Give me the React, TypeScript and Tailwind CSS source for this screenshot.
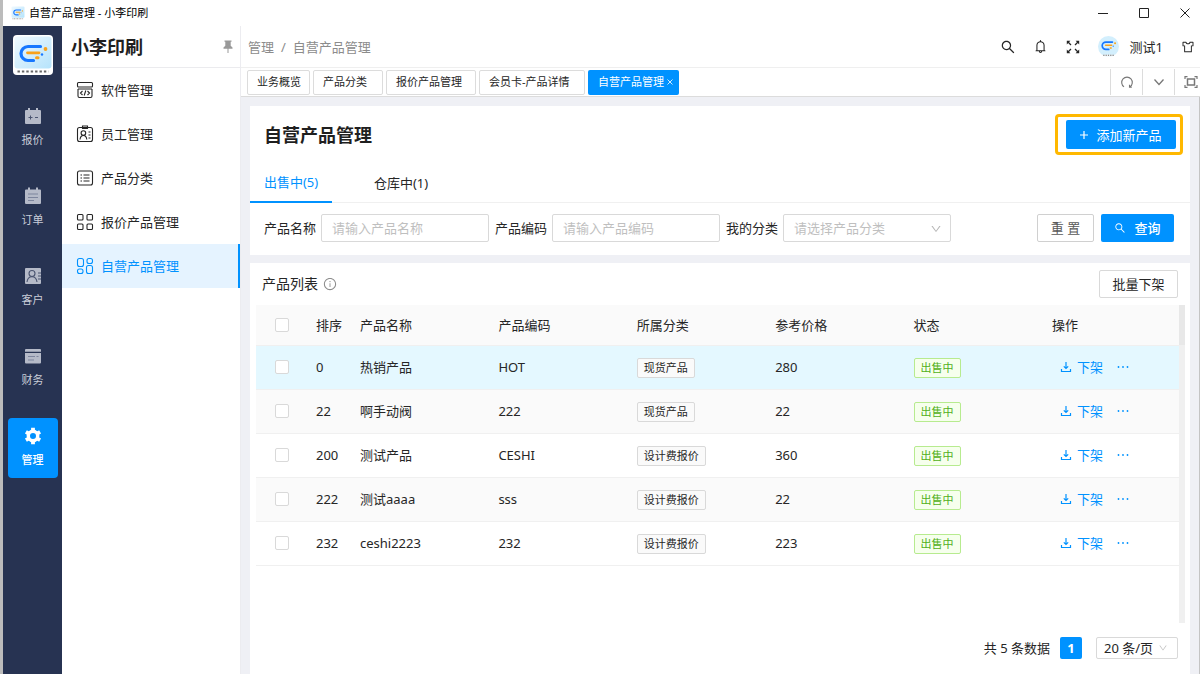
import type { ReactNode } from 'react';
import {
  AiOutlineBell,
  AiOutlineDown,
  AiOutlineInfoCircle,
  AiOutlineSearch,
  AiOutlineSkin,
} from 'react-icons/ai';

interface Product {
  sort: number;
  name: string;
  code: string;
  category: string;
  price: number;
}

const products: Product[] = [
  { sort: 0, name: '热销产品', code: 'HOT', category: '现货产品', price: 280 },
  { sort: 22, name: '啊手动阀', code: '222', category: '现货产品', price: 22 },
  { sort: 200, name: '测试产品', code: 'CESHI', category: '设计费报价', price: 360 },
  { sort: 222, name: '测试aaaa', code: 'sss', category: '设计费报价', price: 22 },
  { sort: 232, name: 'ceshi2223', code: '232', category: '设计费报价', price: 223 },
];

const columns = ['产品名称', '产品编码', '所属分类', '参考价格', '状态'];

function LogoMark() {
  return (
    <>
      <path d="M27.500 11.500H15a7 7 0 0 0 0 14h5.500" fill="none" stroke="#1677ff" strokeWidth="3.200" strokeLinecap="round" />
      <path d="M14.500 17.800h11.500" stroke="#f9a11b" strokeWidth="2.800" strokeLinecap="round" />
      <circle cx="32.500" cy="14" r="1.900" fill="#f9a11b" />
      <circle cx="29" cy="19.500" r="1.200" fill="#1677ff" />
      <path d="M23.500 22.800h1.500" stroke="#f9a11b" strokeWidth="3" strokeLinecap="round" />
    </>
  );
}

function Logo({ className }: { className: string }) {
  return (
    <svg viewBox="0 0 40 40" className={className} aria-hidden="true">
      <defs>
        <linearGradient id="logoBg" x1="0" y1="0" x2="1" y2="1">
          <stop offset="0" stopColor="#f0f9ff" />
          <stop offset="1" stopColor="#b5e3fb" />
        </linearGradient>
      </defs>
      <rect width="40" height="40" rx="4" fill="#fff" />
      <rect x="1.500" y="1.500" width="37" height="32" rx="3" fill="url(#logoBg)" />
      <LogoMark />
      <path d="M4.500 36.500h31" stroke="#666" strokeWidth="2" strokeDasharray="2.400 2" />
    </svg>
  );
}

function Avatar() {
  return (
    <svg viewBox="0 0 40 40" className="h-[21px] w-[21px]" aria-hidden="true">
      <circle cx="20" cy="20" r="20" fill="#d3effd" />
      <LogoMark />
      <path d="M8 35.500h24a20 20 0 0 1-24 0z" fill="#fff" />
      <path d="M10 36.500h20" stroke="#666" strokeWidth="2" strokeDasharray="2.400 2" />
    </svg>
  );
}

function RailIcon({ children }: { children: ReactNode }) {
  return (
    <svg viewBox="0 0 18 18" className="h-[18px] w-[18px]" fill="#b5bac8" aria-hidden="true">
      {children}
    </svg>
  );
}

const railItems = [
  {
    label: '报价',
    icon: (
      <RailIcon>
        <path d="M2 3h14a1 1 0 0 1 1 1v12a1 1 0 0 1-1 1H2a1 1 0 0 1-1-1V4a1 1 0 0 1 1-1z" />
        <path d="M5 1v3M13 1v3" stroke="#b5bac8" strokeWidth="2" />
        <path d="M4.500 10.500h4M6.500 8.500v4M11 10.500h3" stroke="#4a5470" strokeWidth="1" />
      </RailIcon>
    ),
  },
  {
    label: '订单',
    icon: (
      <RailIcon>
        <path d="M2 2.500h14a1 1 0 0 1 1 1V16a1 1 0 0 1-1 1H2a1 1 0 0 1-1-1V3.500a1 1 0 0 1 1-1z" />
        <path d="M5 .5v3M13 .5v3" stroke="#b5bac8" strokeWidth="2" />
        <path d="M4 7h10M4 10.500h10M4 13.500h6" stroke="#7d859d" strokeWidth="1" />
      </RailIcon>
    ),
  },
  {
    label: '客户',
    icon: (
      <RailIcon>
        <rect x="1" y="1" width="16" height="16" rx="1" />
        <circle cx="8" cy="6.500" r="3" fill="none" stroke="#4a5470" strokeWidth="1.100" />
        <path d="M3 15c.4-3.500 2.500-5.300 5-5.300s4.600 1.800 5 5.300M14 6h3M14 9h3M14 12h3" fill="none" stroke="#4a5470" strokeWidth="1.100" />
      </RailIcon>
    ),
  },
  {
    label: '财务',
    icon: (
      <RailIcon>
        <path d="M2 2h14a1 1 0 0 1 1 1v1.800H1V3a1 1 0 0 1 1-1zM1 6h16v9.500a1 1 0 0 1-1 1H2a1 1 0 0 1-1-1z" />
        <path d="M4 9.500h7M12.500 9.500h2M4 13h6" stroke="#7d859d" strokeWidth="1" />
      </RailIcon>
    ),
  },
  {
    label: '管理',
    active: true,
    icon: (
      <svg viewBox="0 0 18 18" className="h-[18px] w-[18px]" aria-hidden="true">
        <circle cx="9" cy="9" r="4.700" fill="none" stroke="#fff" strokeWidth="3.400" />
        <path d="M9 .8v3M9 14.200v3M1.900 4.900l2.600 1.500M13.500 11.600l2.600 1.500M1.900 13.100l2.600-1.500M13.500 6.400l2.600-1.500" stroke="#fff" strokeWidth="3.800" />
      </svg>
    ),
  },
];

function MenuIcon({ children }: { children: ReactNode }) {
  return (
    <svg viewBox="0 0 18 18" className="h-[18px] w-[18px]" fill="none" stroke="currentColor" strokeWidth="1.100" aria-hidden="true">
      {children}
    </svg>
  );
}

const menuItems = [
  {
    label: '软件管理',
    icon: (
      <MenuIcon>
        <rect x="1.500" y="1.500" width="15" height="4.500" rx="1" />
        <path d="M2 8v7a1.500 1.500 0 0 0 1.500 1.500h11A1.500 1.500 0 0 0 16 15V8M2 8h14M6.500 10l-2 2 2 2M11.500 10l2 2-2 2M9.800 9.500l-1.600 5" />
      </MenuIcon>
    ),
  },
  {
    label: '员工管理',
    icon: (
      <MenuIcon>
        <rect x="1.500" y="2.500" width="15" height="14" rx="2" />
        <path d="M6.500 2.500V1h5v2.500h-5zM4 14.500c.3-2.600 1.500-4 3.400-4s3.100 1.400 3.400 4M12.500 7h2M12.500 10h2M12.500 13h2" />
        <circle cx="7.400" cy="8" r="2.300" />
      </MenuIcon>
    ),
  },
  {
    label: '产品分类',
    icon: (
      <MenuIcon>
        <rect x="1.500" y="2" width="15" height="14" rx="2" />
        <path d="M4.500 6h1.500M4.500 9h1.500M4.500 12h1.500M7.500 6h6M7.500 9h6M7.500 12h6" />
      </MenuIcon>
    ),
  },
  {
    label: '报价产品管理',
    icon: (
      <MenuIcon>
        <rect x="1.500" y="1.500" width="5.500" height="5.500" rx="1" />
        <rect x="11" y="1.500" width="5.500" height="5.500" rx="1" />
        <rect x="1.500" y="11" width="5.500" height="5.500" rx="1" />
        <rect x="11" y="11" width="5.500" height="5.500" rx="1" />
      </MenuIcon>
    ),
  },
  {
    label: '自营产品管理',
    active: true,
    icon: (
      <MenuIcon>
        <rect x="1.500" y="1.500" width="6" height="8" rx="2" />
        <rect x="11" y="1.500" width="5.500" height="5" rx="2" />
        <rect x="1.500" y="12" width="5.500" height="4.500" rx="2" />
        <rect x="10.500" y="8.500" width="6" height="8" rx="2" />
      </MenuIcon>
    ),
  },
];

function TitleBar() {
  return (
    <div className="flex h-[26px] shrink-0 items-center justify-between pr-[10px] pl-2">
      <div className="flex items-center gap-1">
        <Logo className="h-[14px] w-[14px]" />
        <span className="text-[11px] text-black">自营产品管理 - 小李印刷</span>
      </div>
      <div className="flex items-center gap-[31px] text-[#222]">
        <button aria-label="最小化">
          <svg viewBox="0 0 10 10" className="h-[10px] w-[10px]" stroke="currentColor"><path d="M0 5.500h10" /></svg>
        </button>
        <button aria-label="最大化">
          <svg viewBox="0 0 10 10" className="h-[10px] w-[10px]" stroke="currentColor" fill="none"><path d="M.5.500h9v9h-9z" /></svg>
        </button>
        <button aria-label="关闭">
          <svg viewBox="0 0 10 10" className="h-[10px] w-[10px]" stroke="currentColor"><path d="M.5.500l9 9M9.500.500l-9 9" /></svg>
        </button>
      </div>
    </div>
  );
}

function Rail() {
  return (
    <nav className="flex w-[59px] shrink-0 flex-col items-center bg-[#273352]">
      <Logo className="mt-[9px] mb-[23px] h-10 w-10" />
      <div className="flex flex-col gap-5">
        {railItems.map((item) => (
          <a
            key={item.label}
            href="#"
            className={`flex h-[60px] w-[50px] flex-col items-center gap-[6px] rounded pt-[9px] text-[11px] leading-[18px] ${
              item.active ? 'bg-[#0092ff] font-medium text-white' : 'text-[#c9cdd8]'
            }`}
          >
            {item.icon}
            {item.label}
          </a>
        ))}
      </div>
    </nav>
  );
}

function Sidebar() {
  return (
    <aside className="w-[179px] shrink-0 border-r border-[#ececf0] bg-white">
      <div className="flex h-[42px] items-center justify-between border-b border-[#ebebee] pr-[7px] pl-[9px]">
        <h2 className="text-[18px] font-bold text-[#1f1f1f]">小李印刷</h2>
        <svg viewBox="0 0 10 13" className="h-[13px] w-[10px]" fill="#999" aria-hidden="true">
          <path d="M1.500.500h7v1.300h-.8v4L9.500 7.500V8.800h-4V13h-1V8.800h-4V7.500l1.800-1.700v-4h-.8z" />
        </svg>
      </div>
      {menuItems.map((item) => (
        <a
          key={item.label}
          href="#"
          className={`flex h-11 items-center gap-[7px] pl-[14px] text-[13px] ${
            item.active ? 'border-r-2 border-[#0092ff] bg-[#e5f3ff] text-[#0092ff]' : 'text-[#262626]'
          }`}
        >
          {item.icon}
          {item.label}
        </a>
      ))}
    </aside>
  );
}

function Header() {
  return (
    <header className="flex h-[42px] items-center justify-between border-b border-[#efefef] bg-white pr-[5px] pl-[7px] text-[13px]">
      <div className="flex gap-[7px] text-[#8c8c8c]">
        <a href="#">管理</a>
        <span>/</span>
        <span>自营产品管理</span>
      </div>
      <div className="flex items-center text-[#262626]">
        <button aria-label="搜索" className="mr-[17px]"><AiOutlineSearch className="h-4 w-4" /></button>
        <button aria-label="通知" className="mr-[18px]"><AiOutlineBell className="h-[15px] w-[15px]" /></button>
        <button aria-label="全屏" className="mr-[18px]">
          <svg viewBox="0 0 14 14" className="h-[14px] w-[14px]" fill="currentColor" stroke="currentColor" strokeWidth="1.300">
            <path d="M2 2l3 3M12 2L9 5M2 12l3-3M12 12L9 9" />
            <path d="M.8.800h3.600L.8 4.400zM13.200.800v3.600L9.600.800zM.8 13.200V9.600l3.600 3.600zM13.200 13.200H9.600l3.600-3.600z" strokeWidth="0" />
          </svg>
        </button>
        <span className="mr-[11px]"><Avatar /></span>
        <span className="mr-[18px]">测试1</span>
        <button aria-label="主题"><AiOutlineSkin className="h-[14px] w-[14px]" /></button>
      </div>
    </header>
  );
}

function PageTabs() {
  return (
    <div className="flex h-[29px] items-center justify-between border-b border-[#dcdcdc] bg-white pl-[6px]">
      <div className="flex gap-[3px] text-[11px] text-[#262626]">
        <a href="#" className="flex h-[25px] w-[63px] items-center rounded-xs border border-[#dcdcdc] pl-[9px]">业务概览</a>
        <a href="#" className="flex h-[25px] w-[70px] items-center rounded-xs border border-[#dcdcdc] pl-[9px]">产品分类</a>
        <a href="#" className="flex h-[25px] w-[90px] items-center rounded-xs border border-[#dcdcdc] pl-[9px]">报价产品管理</a>
        <a href="#" className="flex h-[25px] w-[106px] items-center rounded-xs border border-[#dcdcdc] pl-[9px]">会员卡-产品详情</a>
        <a href="#" className="flex h-[25px] w-[91px] items-center gap-[3px] rounded-xs bg-[#0092ff] pl-[10px] text-white">
          自营产品管理
          <svg viewBox="0 0 6 6" className="h-[6px] w-[6px] shrink-0" stroke="currentColor" strokeWidth=".8" aria-hidden="true"><path d="M.5.500l5 5M5.500.500l-5 5" /></svg>
        </a>
      </div>
      <div className="flex h-[26px] text-[#777]">
        <button aria-label="刷新" className="flex w-8 items-center justify-center border-l border-[#dcdcdc]">
          <svg viewBox="0 0 14 14" className="h-[14px] w-[14px]" fill="none" stroke="currentColor" strokeWidth="1.100">
            <path d="M4 11.800a5.300 5.300 0 1 1 6 0M9.500 9.800v2.400h2.300" />
          </svg>
        </button>
        <button aria-label="更多" className="flex w-8 items-center justify-center border-l border-[#dcdcdc]">
          <svg viewBox="0 0 12 12" className="h-3 w-3" fill="none" stroke="currentColor" strokeWidth="1.300"><path d="M1.500 3.500 6 8.500l4.500-5" /></svg>
        </button>
        <button aria-label="放大" className="flex w-[26px] items-center justify-end border-l border-[#dcdcdc] pr-[2px]">
          <svg viewBox="0 0 14 14" className="h-[14px] w-[14px]" fill="none" stroke="currentColor" strokeWidth="1.200">
            <rect x="3.500" y="4" width="7" height="6" strokeWidth="1.500" />
            <path d="M1 4V1.700h2.500M10.500 1.700H13V4M13 10v2.300h-2.500M3.500 12.300H1V10" />
          </svg>
        </button>
      </div>
    </div>
  );
}

function FilterCard() {
  return (
    <section className="bg-white pb-[13px]">
      <div className="flex h-[57px] items-center justify-between pr-[14px] pl-[14px]">
        <h1 className="text-[18px] font-bold text-[#1f1f1f]">自营产品管理</h1>
        <div className="relative">
          <button className="flex h-[29px] w-[110px] items-center justify-center gap-2 rounded-xs bg-[#0092ff] text-[13px] text-white">
            <svg viewBox="0 0 8 8" className="h-2 w-2" stroke="currentColor" strokeWidth="1.200" aria-hidden="true"><path d="M4 0v8M0 4h8" /></svg>
            添加新产品
          </button>
          <div className="pointer-events-none absolute -top-[6px] -right-[7px] -bottom-[6px] -left-[11px] rounded-sm border-[3px] border-[#ffb800]" />
        </div>
      </div>
      <div className="flex h-10 gap-7 border-b border-[#f0f0f0] text-[13px] text-[#262626]">
        <button className="-mb-px w-[82px] border-b-2 border-[#0092ff] text-[#0092ff]">出售中(5)</button>
        <button className="w-[82px]">仓库中(1)</button>
      </div>
      <div className="flex items-center justify-between pt-[11px] pr-4 pl-[14px] text-[13px] text-[#262626]">
        <div className="flex items-center gap-[6px]">
          <div className="flex items-center gap-[5px]">
            <label htmlFor="name">产品名称</label>
            <input id="name" placeholder="请输入产品名称" className="h-7 w-[168px] rounded-xs border border-[#d9d9d9] px-[10px] placeholder:text-[#bfbfbf]" />
          </div>
          <div className="flex items-center gap-[5px]">
            <label htmlFor="code">产品编码</label>
            <input id="code" placeholder="请输入产品编码" className="h-7 w-[168px] rounded-xs border border-[#d9d9d9] px-[10px] placeholder:text-[#bfbfbf]" />
          </div>
          <div className="flex items-center gap-[5px]">
            <label htmlFor="category">我的分类</label>
            <div className="relative">
              <select id="category" className="h-7 w-[168px] appearance-none rounded-xs border border-[#d9d9d9] px-[10px] text-[#bfbfbf]">
                <option>请选择产品分类</option>
              </select>
              <AiOutlineDown className="pointer-events-none absolute top-[9px] right-[9px] h-3 w-3 text-[#b5b5b5]" />
            </div>
          </div>
        </div>
        <div className="flex gap-[7px]">
          <button className="h-7 w-[57px] rounded-xs border border-[#d0d0d0] text-[#595959]">重 置</button>
          <button className="flex h-7 w-[73px] items-center justify-center gap-2 rounded-xs bg-[#0092ff] font-medium text-white">
            <AiOutlineSearch className="h-3 w-3" />
            查询
          </button>
        </div>
      </div>
    </section>
  );
}

function Checkbox({ label }: { label: string }) {
  return (
    <input type="checkbox" aria-label={label} className="mx-auto block h-[14px] w-[14px] appearance-none rounded-xs border border-[#d9d9d9] bg-white" />
  );
}

function ProductTable() {
  return (
    <div className="flex min-h-[318px] pr-[5px] pl-[6px]">
      <div className="flex-1">
        <table className="w-full table-fixed text-left text-[13px] text-[#262626]">
          <thead>
            <tr className="h-10 border-b border-[#f0f0f0] bg-[#fafafa]">
              <th className="w-[52px]"><Checkbox label="全选" /></th>
              <th className="w-11 pl-2 font-normal whitespace-nowrap">排序</th>
              {columns.map((name) => (
                <th key={name} className="pl-2 font-normal">{name}</th>
              ))}
              <th className="w-[135px] pl-2 font-normal">操作</th>
            </tr>
          </thead>
          <tbody>
            {products.map((p, i) => (
              <tr
                key={p.sort}
                className={`h-11 border-b border-[#f0f0f0] ${i === 0 ? 'bg-[#e4f8ff]' : i % 2 === 1 ? 'bg-[#fafafa]' : 'bg-white'}`}
              >
                <td><Checkbox label={p.name} /></td>
                <td className="pl-2">{p.sort}</td>
                <td className="pl-2">{p.name}</td>
                <td className="pl-2">{p.code}</td>
                <td className="pl-2">
                  <span className="inline-block rounded-xs border border-[#d9d9d9] bg-[#fafafa] px-[6px] text-[11px] leading-[18px]">{p.category}</span>
                </td>
                <td className="pl-2">{p.price}</td>
                <td className="pl-2">
                  <span className="inline-block rounded-xs border border-[#b7eb8f] bg-[#f6ffed] px-[6px] text-[11px] leading-[18px] text-[#52b020]">出售中</span>
                </td>
                <td className="pl-4">
                  <div className="flex items-center text-[#0092ff]">
                    <button className="flex items-center gap-[5px]">
                      <svg viewBox="0 0 12 12" className="h-3 w-3" fill="none" stroke="currentColor" strokeWidth="1.200" aria-hidden="true">
                        <path d="M6 1v6.500M3.800 5.300 6 7.500l2.200-2.200M1.500 8v2.500h9V8" />
                      </svg>
                      下架
                    </button>
                    <button aria-label="更多操作" className="ml-[14px]">
                      <svg viewBox="0 0 12 4" className="h-1 w-3" fill="currentColor">
                        <circle cx="1.500" cy="2" r=".9" />
                        <circle cx="6" cy="2" r=".9" />
                        <circle cx="10.500" cy="2" r=".9" />
                      </svg>
                    </button>
                  </div>
                </td>
              </tr>
            ))}
          </tbody>
        </table>
      </div>
      <div className="w-[6px] bg-[#f0f0f0]">
        <div className="h-10 bg-[#e8e8e8]" />
      </div>
    </div>
  );
}

function ListCard() {
  return (
    <section className="flex-1 bg-white pb-4">
      <div className="flex h-[42px] items-center justify-between pr-3 pl-3">
        <div className="flex items-center gap-[5px] text-[#262626]">
          <h2 className="text-[14px]">产品列表</h2>
          <AiOutlineInfoCircle className="h-[14px] w-[14px] text-[#8c8c8c]" />
        </div>
        <button className="h-7 w-[79px] rounded-xs border border-[#d9d9d9] text-[13px] text-[#262626]">批量下架</button>
      </div>
      <ProductTable />
      <div className="flex items-center justify-end pt-[14px] pr-3 text-[13px] text-[#262626]">
        <span className="mr-[10px]">共 5 条数据</span>
        <button className="mr-[14px] h-[22px] w-[22px] rounded-xs bg-[#0092ff] font-bold text-white">1</button>
        <div className="relative">
          <select aria-label="每页条数" className="block h-[22px] w-[82px] appearance-none rounded-xs border border-[#d9d9d9] px-[7px] leading-[20px]">
            <option>20 条/页</option>
          </select>
          <AiOutlineDown className="pointer-events-none absolute top-[6px] right-[10px] h-[10px] w-[10px] text-[#bfbfbf]" />
        </div>
      </div>
    </section>
  );
}

export default function App() {
  return (
    <div className="flex min-h-screen flex-col border-l-[3px] border-[#bcbcbc] bg-white font-['Noto_Sans','Noto_Sans_CJK_SC',sans-serif] leading-5">
      <TitleBar />
      <div className="flex flex-1">
        <Rail />
        <Sidebar />
        <div className="flex min-w-0 flex-1 flex-col">
          <Header />
          <PageTabs />
          <main className="flex flex-1 flex-col gap-2 border-r border-[#c4c4c4] bg-[#eff0f5] pt-[9px] pr-[9px] pl-[9px]">
            <FilterCard />
            <ListCard />
          </main>
        </div>
      </div>
    </div>
  );
}
